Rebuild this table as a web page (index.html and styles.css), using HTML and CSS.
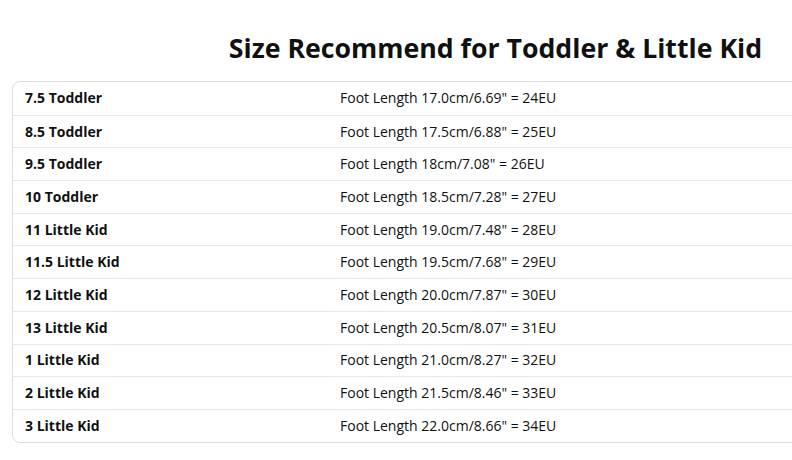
FILE: index.html
```html
<!DOCTYPE html>
<html>
<head>
<meta charset="utf-8">
<link rel="stylesheet" href="styles.css">
</head>
<body>
<div class="frame">
<div class="page">
  <h2 class="title">Size Recommend for Toddler &amp; Little Kid</h2>
  <div class="table">
    <div class="row"><div class="size">7.5 Toddler</div><div class="len">Foot Length 17.0cm/6.69" = 24EU</div></div>
    <div class="row"><div class="size">8.5 Toddler</div><div class="len">Foot Length 17.5cm/6.88" = 25EU</div></div>
    <div class="row"><div class="size">9.5 Toddler</div><div class="len">Foot Length 18cm/7.08" = 26EU</div></div>
    <div class="row"><div class="size">10 Toddler</div><div class="len">Foot Length 18.5cm/7.28" = 27EU</div></div>
    <div class="row"><div class="size">11 Little Kid</div><div class="len">Foot Length 19.0cm/7.48" = 28EU</div></div>
    <div class="row"><div class="size">11.5 Little Kid</div><div class="len">Foot Length 19.5cm/7.68" = 29EU</div></div>
    <div class="row"><div class="size">12 Little Kid</div><div class="len">Foot Length 20.0cm/7.87" = 30EU</div></div>
    <div class="row"><div class="size">13 Little Kid</div><div class="len">Foot Length 20.5cm/8.07" = 31EU</div></div>
    <div class="row"><div class="size">1 Little Kid</div><div class="len">Foot Length 21.0cm/8.27" = 32EU</div></div>
    <div class="row"><div class="size">2 Little Kid</div><div class="len">Foot Length 21.5cm/8.46" = 33EU</div></div>
    <div class="row"><div class="size">3 Little Kid</div><div class="len">Foot Length 22.0cm/8.66" = 34EU</div></div>
  </div>
</div>
</div>
</body>
</html>
```
FILE: styles.css
```css
html, body {
  margin: 0;
  padding: 0;
  background: #fff;
  overflow: hidden;
}
body {
  font-family: "Open Sans", "Noto Sans", sans-serif;
  color: #0f1111;
}
.frame {
  width: 792px;
  height: 460px;
  overflow: hidden;
}
.page {
  width: 967px;
  margin-left: 12px;
  padding-top: 29px;
}
.title {
  margin: 0 0 14px;
  text-align: center;
  font-size: 26.7px;
  line-height: 38px;
  font-weight: 700;
}
.table {
  border: 1px solid #dddddd;
  border-radius: 8px;
}
.row {
  display: grid;
  grid-template-columns: 316px 1fr;
  height: 32.7px;
  align-items: center;
  border-top: 1px solid #e7e7e7;
  font-size: 14px;
  box-sizing: border-box;
  padding-bottom: 1px;
}
.row:first-child {
  border-top: none;
}
.size {
  padding-left: 12px;
  font-weight: 700;
}
.len {
  padding-left: 11px;
}
```
